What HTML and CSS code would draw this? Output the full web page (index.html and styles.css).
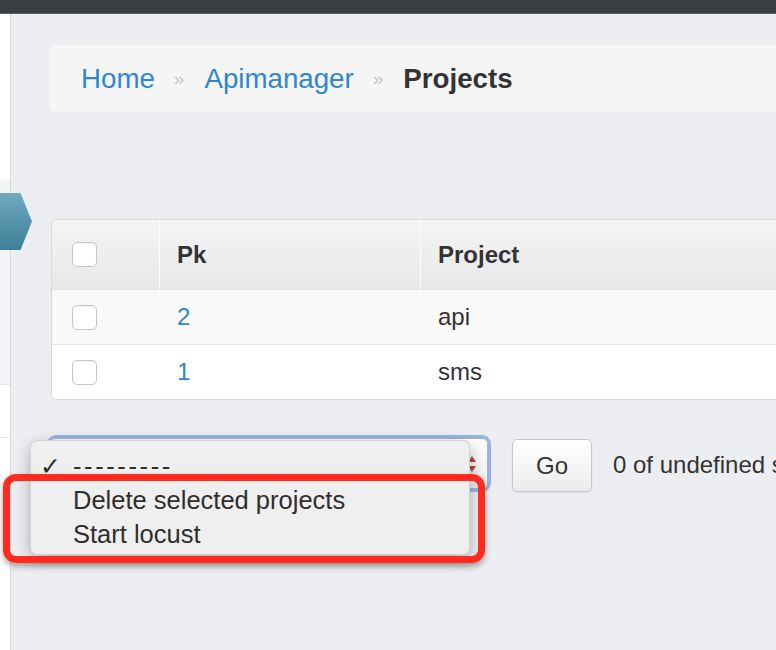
FILE: index.html
```html
<!DOCTYPE html>
<html lang="en">
<head>
<meta charset="utf-8">
<title>Projects</title>
<link rel="stylesheet" href="styles.css">
</head>
<body>
<div class="topbar"></div>
<div class="layout">
  <aside class="sidebar">
    <div class="side-top"></div>
    <div class="side-menu"></div>
    <div class="side-item"></div>
  </aside>
  <main class="main">
    <nav class="breadcrumb">
      <a class="crumb-link" href="#">Home</a>
      <span class="sep">&raquo;</span>
      <a class="crumb-link" href="#">Apimanager</a>
      <span class="sep">&raquo;</span>
      <span class="crumb-current">Projects</span>
    </nav>

    <div class="table-wrap">
      <table class="grid">
        <colgroup>
          <col class="col-check">
          <col class="col-pk">
          <col>
        </colgroup>
        <thead>
          <tr>
            <th class="cell-check"><span class="cb"></span></th>
            <th>Pk</th>
            <th>Project</th>
          </tr>
        </thead>
        <tbody>
          <tr class="row-odd">
            <td class="cell-check"><span class="cb"></span></td>
            <td><a class="pk-link" href="#">2</a></td>
            <td>api</td>
          </tr>
          <tr class="row-even">
            <td class="cell-check"><span class="cb"></span></td>
            <td><a class="pk-link" href="#">1</a></td>
            <td>sms</td>
          </tr>
        </tbody>
      </table>
    </div>

    <div class="actions">
      <div class="select">
        <svg class="select-arrows" width="10" height="20" viewBox="0 0 10 20">
          <path d="M5 2 L9 8 L1 8 Z" fill="#b3474a"/>
          <path d="M5 18 L9 12 L1 12 Z" fill="#b3474a"/>
        </svg>
      </div>
      <button class="go">Go</button>
      <span class="counter">0 of undefined selected</span>

      <div class="popup">
        <div class="popup-item"><span class="check">&#10003;</span><span class="dashes">---------</span></div>
        <div class="popup-item"><span class="check"></span><span>Delete selected projects</span></div>
        <div class="popup-item"><span class="check"></span><span>Start locust</span></div>
      </div>
      <div class="highlight"></div>
    </div>
  </main>
</div>
<div class="hex"></div>
</body>
</html>
```

FILE: styles.css
```css
html, body {
  margin: 0;
  padding: 0;
  height: 650px;
  overflow: hidden;
}

body {
  background: #edeef1;
  font-family: "Liberation Sans", Arial, Helvetica, sans-serif;
  color: #333;
  position: relative;
}

.topbar {
  height: 13px;
  background: #3a3d41;
  border-bottom: 1px solid #5c5f63;
}

.layout {
  display: flex;
  min-height: 636px;
}

.sidebar {
  flex: 0 0 10px;
  background: #ffffff;
  border-right: 1px solid #d9dadd;
}

.side-top {
  height: 166px;
  background: #ffffff;
}

.side-menu {
  height: 204px;
  background: #f4f5f7;
  border-bottom: 1px solid #e4e5e8;
}

.side-item {
  height: 52px;
  background: #ffffff;
  border-bottom: 1px solid #e4e5e8;
}

.main {
  flex: 0 0 860px;
  padding: 31px 0 0 39px;
  box-sizing: border-box;
}

/* breadcrumb */
.breadcrumb {
  height: 67px;
  display: flex;
  align-items: center;
  padding-left: 31px;
  background: #f5f5f6;
  border-radius: 6px;
  font-size: 27.7px;
}

.crumb-link {
  color: #2f87c9;
  text-decoration: none;
}

.sep {
  color: #c4c4c4;
  font-size: 19px;
  padding: 0 20px 0 19px;
}

.crumb-current {
  color: #333;
  font-weight: bold;
}

/* table */
.table-wrap {
  margin: 107px 0 0 1px;
  border: 1px solid #d9d9d9;
  border-radius: 6px;
  overflow: hidden;
  background: #fff;
}

.grid {
  width: 100%;
  border-collapse: separate;
  border-spacing: 0;
  table-layout: fixed;
  font-size: 24px;
}

.col-check { width: 107px; }
.col-pk { width: 261px; }

.grid th,
.grid td {
  padding: 0 0 0 17px;
  text-align: left;
  vertical-align: middle;
  border-left: 1px solid rgba(255, 255, 255, 0.85);
}

.grid th.cell-check,
.grid td.cell-check {
  padding-left: 20px;
  border-left: none;
}

.grid th {
  height: 69px;
  font-weight: bold;
  color: #333;
  background: linear-gradient(#f5f5f5, #e7e7e7);
}

.grid td {
  height: 54px;
  color: #333;
  border-top: 1px solid #e4e4e4;
}

.row-odd td { background: #f9f9f9; }
.row-even td { background: #ffffff; }

.cb {
  display: block;
  width: 25px;
  height: 25px;
  box-sizing: border-box;
  border: 1.5px solid #c6c6c6;
  border-radius: 5px;
  background: #fff;
  box-shadow: inset 0 1px 1px rgba(0, 0, 0, 0.05);
}

.pk-link {
  color: #2f87c9;
  text-decoration: none;
}

/* actions */
.actions {
  position: relative;
  display: flex;
  align-items: flex-start;
  margin-top: 38px;
}

.select {
  width: 438px;
  height: 51px;
  box-sizing: border-box;
  border: 1px solid #a4b4cc;
  border-radius: 6px;
  background: linear-gradient(#ffffff, #ececec);
  box-shadow: 0 0 0 3px rgba(118, 160, 228, 0.75);
  display: flex;
  align-items: center;
  justify-content: flex-end;
  padding-right: 10px;
}

.go {
  margin: 1px 0 0 24px;
  width: 80px;
  height: 53px;
  border: 1px solid #c7c7c7;
  border-radius: 5px;
  background: linear-gradient(#ffffff, #ececec);
  box-shadow: 0 1px 1px rgba(0, 0, 0, 0.08);
  font-family: "Liberation Sans", Arial, sans-serif;
  font-size: 24px;
  color: #333;
  padding: 0;
}

.counter {
  margin-left: 21px;
  height: 53px;
  display: flex;
  align-items: center;
  font-size: 24px;
  color: #333;
  white-space: nowrap;
}

.popup {
  position: absolute;
  left: -20px;
  top: 2px;
  width: 440px;
  height: 115px;
  box-sizing: border-box;
  padding: 8px 0 5px;
  background: #efefef;
  border: 1px solid rgba(0, 0, 0, 0.12);
  border-radius: 7px;
  box-shadow: 0 5px 15px rgba(0, 0, 0, 0.28);
  z-index: 2;
}

.popup-item {
  height: 34px;
  display: flex;
  align-items: center;
  padding-left: 9px;
  font-size: 25.5px;
  color: #2e2e2e;
  white-space: nowrap;
}

.check {
  display: inline-block;
  width: 33px;
  font-family: "DejaVu Sans", sans-serif;
  font-size: 25px;
  line-height: 1;
}

.dashes {
  letter-spacing: 2.6px;
}

.highlight {
  position: absolute;
  left: -47px;
  top: 36px;
  width: 482px;
  height: 89px;
  box-sizing: border-box;
  border: 7px solid #fe2b1e;
  border-radius: 13px;
  box-shadow: 0 3px 6px rgba(0, 0, 0, 0.35);
  z-index: 3;
}

.hex {
  position: absolute;
  left: 0;
  top: 193px;
  width: 32px;
  height: 57px;
  background: linear-gradient(#6eaac0, #3e7e96);
  clip-path: polygon(0 0, 64% 0, 100% 50%, 64% 100%, 0 100%);
}
```
